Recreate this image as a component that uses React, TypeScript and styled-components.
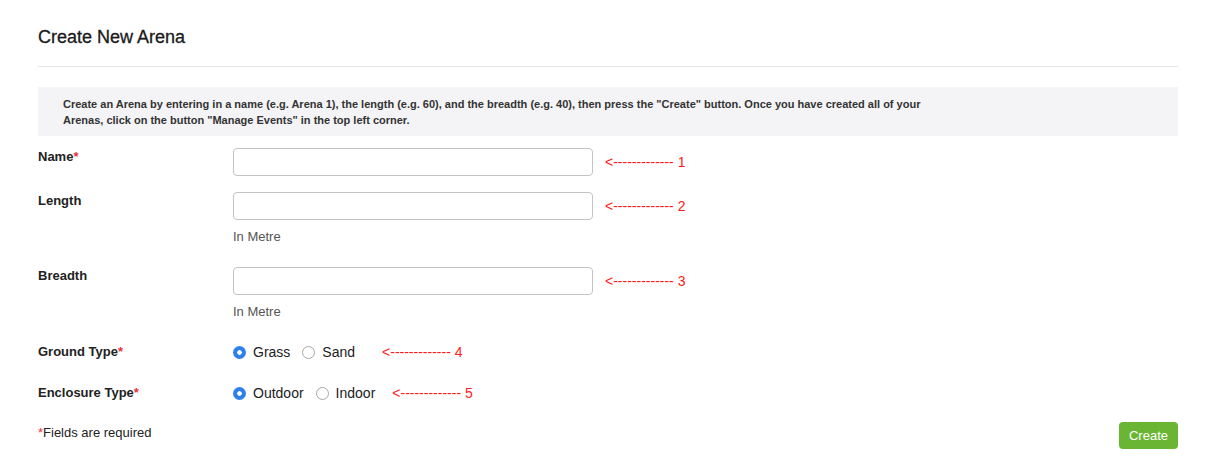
import styled, { createGlobalStyle } from "styled-components";

const GlobalStyle = createGlobalStyle`
    body {
        margin: 0;
        background: #fff;
        font-family: "Liberation Sans", Arial, sans-serif;
        color: #333;
    }
`;

const Page = styled.div`
    width: 1140px;
    padding: 26px 0 0 38px;
`;

const Title = styled.h1`
    margin: 0;
    font-size: 18px;
    line-height: 22px;
    font-weight: 400;
    color: #1a1a1a;
    -webkit-text-stroke: 0.3px #1a1a1a;
    padding-bottom: 18px;
    border-bottom: 1px solid #e6e6e6;
`;

const Notice = styled.div`
    margin-top: 20px;
    background: #f4f4f6;
    padding: 9px 25px 8px;
    font-size: 11px;
    line-height: 16px;
    font-weight: bold;
    color: #333;
`;

const NoticeText = styled.p`
    margin: 0;
    max-width: 870px;
`;

const Form = styled.form`
    margin-top: 12px;
    display: flex;
    flex-direction: column;
    gap: 16px;
`;

const Row = styled.div<{ $radio?: boolean }>`
    display: flex;
    align-items: ${(p) => (p.$radio ? "center" : "flex-start")};
    min-height: 18px;
    margin-top: ${(p) => (p.$radio ? "1px" : "0")};
    margin-bottom: ${(p) => (p.$radio ? "6px" : "0")};
`;

const Label = styled.label`
    width: 195px;
    flex-shrink: 0;
    font-size: 13px;
    line-height: 18px;
    font-weight: bold;
    color: #222;
`;

const Star = styled.span`
    color: #e8303a;
`;

const Field = styled.div`
    display: flex;
    flex-direction: column;
`;

const InputLine = styled.div`
    display: flex;
    align-items: center;
`;

const TextInput = styled.input`
    width: 360px;
    height: 28px;
    box-sizing: border-box;
    border: 1px solid #c4c4c4;
    border-radius: 4px;
    padding: 0 8px;
    font-size: 13px;
    outline: none;
`;

const Help = styled.div`
    margin-top: 8px;
    margin-bottom: 5px;
    font-size: 13px;
    line-height: 18px;
    color: #555;
`;

const Note = styled.span<{ $gap: number }>`
    margin-left: ${(p) => p.$gap}px;
    color: #ff1a1a;
    font-size: 14px;
    line-height: 18px;
    white-space: nowrap;
`;

const RadioGroup = styled.div`
    display: flex;
    align-items: center;
`;

const RadioLabel = styled.label`
    display: flex;
    align-items: center;
    margin-right: 12px;
    font-size: 14px;
    line-height: 18px;
    color: #222;
`;

const Radio = styled.input`
    appearance: none;
    width: 13px;
    height: 13px;
    margin: 0 7px 0 0;
    border-radius: 50%;
    border: 1px solid #a8a8a8;
    background: #fff;
    box-sizing: border-box;

    &:checked {
        border: none;
        background: radial-gradient(circle, #fff 0 2px, #2f80ed 2.5px);
    }
`;

const Footer = styled.div`
    display: flex;
    justify-content: space-between;
    align-items: flex-start;
`;

const Required = styled.div`
    font-size: 13px;
    line-height: 18px;
    color: #222;
`;

const Button = styled.button`
    margin-top: -2px;
    height: 27px;
    padding: 0 10px;
    border: none;
    border-radius: 4px;
    background: #6ab533;
    color: #fff;
    font-family: inherit;
    font-size: 13px;
`;

const textFields = [
    { name: "Name", required: true, help: false, note: "1" },
    { name: "Length", required: false, help: true, note: "2" },
    { name: "Breadth", required: false, help: true, note: "3" },
];

const radioFields = [
    { name: "Ground Type", options: ["Grass", "Sand"], note: "4", gap: 15 },
    { name: "Enclosure Type", options: ["Outdoor", "Indoor"], note: "5", gap: 5 },
];

const arrow = (n: string) => `<------------- ${n}`;

export default function App() {
    return (
        <>
            <GlobalStyle />
            <Page>
                <Title>Create New Arena</Title>
                <Notice>
                    <NoticeText>
                        Create an Arena by entering in a name (e.g. Arena 1), the length (e.g. 60), and the breadth (e.g. 40), then press the "Create" button. Once you have created all of your Arenas, click on the button "Manage Events" in the top left corner.
                    </NoticeText>
                </Notice>

                <Form onSubmit={(e) => e.preventDefault()}>
                    {textFields.map((f) => (
                        <Row key={f.name}>
                            <Label>
                                {f.name}
                                {f.required && <Star>*</Star>}
                            </Label>
                            <Field>
                                <InputLine>
                                    <TextInput type="text" />
                                    <Note $gap={12}>{arrow(f.note)}</Note>
                                </InputLine>
                                {f.help && <Help>In Metre</Help>}
                            </Field>
                        </Row>
                    ))}

                    {radioFields.map((f) => (
                        <Row $radio key={f.name}>
                            <Label>
                                {f.name}
                                <Star>*</Star>
                            </Label>
                            <RadioGroup>
                                {f.options.map((o, i) => (
                                    <RadioLabel key={o}>
                                        <Radio type="radio" name={f.name} defaultChecked={i === 0} />
                                        {o}
                                    </RadioLabel>
                                ))}
                                <Note $gap={f.gap}>{arrow(f.note)}</Note>
                            </RadioGroup>
                        </Row>
                    ))}

                    <Footer>
                        <Required>
                            <Star>*</Star>Fields are required
                        </Required>
                        <Button type="submit">Create</Button>
                    </Footer>
                </Form>
            </Page>
        </>
    );
}
